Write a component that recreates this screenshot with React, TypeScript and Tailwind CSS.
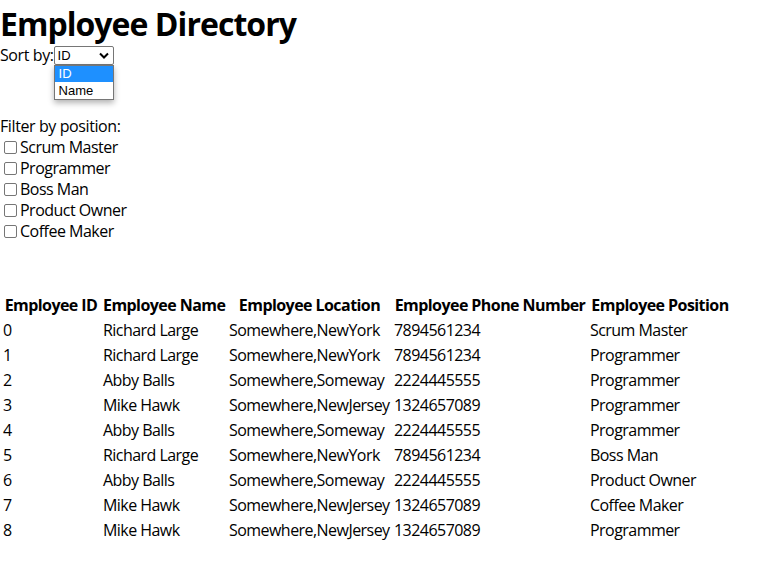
import React from "react";

const rows = [
  ["0", "Richard Large", "Somewhere,NewYork", "7894561234", "Scrum Master"],
  ["1", "Richard Large", "Somewhere,NewYork", "7894561234", "Programmer"],
  ["2", "Abby Balls", "Somewhere,Someway", "2224445555", "Programmer"],
  ["3", "Mike Hawk", "Somewhere,NewJersey", "1324657089", "Programmer"],
  ["4", "Abby Balls", "Somewhere,Someway", "2224445555", "Programmer"],
  ["5", "Richard Large", "Somewhere,NewYork", "7894561234", "Boss Man"],
  ["6", "Abby Balls", "Somewhere,Someway", "2224445555", "Product Owner"],
  ["7", "Mike Hawk", "Somewhere,NewJersey", "1324657089", "Coffee Maker"],
  ["8", "Mike Hawk", "Somewhere,NewJersey", "1324657089", "Programmer"],
];

const positions = ["Scrum Master", "Programmer", "Boss Man", "Product Owner", "Coffee Maker"];

export default function App() {
  return (
    <div
      className="bg-white text-black min-h-[561px] text-[16px] leading-[21px] tracking-[-0.025em]"
      style={{ fontFamily: '"Open Sans", "Noto Sans", sans-serif' }}
    >
      <h1 className="m-0 text-[32px] font-bold leading-[43px] pt-[2px] h-[43px] tracking-[-0.03em]">
        Employee Directory
      </h1>
      <div className="relative flex items-center h-[21px]">
        <span className="pt-[3px]">Sort by:</span>
        <div className="relative mt-[3px] tracking-normal">
          <div
            className="flex items-center justify-between w-[60px] h-[19px] border border-[#767676] rounded-[2px] bg-white pl-[3px] pr-[4px] text-[13px] leading-[17px]"
            style={{ fontFamily: '"Liberation Sans", Arial, sans-serif' }}
          >
            <span>ID</span>
            <svg width="10" height="7" viewBox="0 0 10 7" className="mt-[1px]">
              <path d="M1 1.5 L5 5.5 L9 1.5" fill="none" stroke="#000" strokeWidth="2" />
            </svg>
          </div>
          <div
            className="absolute left-0 top-[19px] w-[60px] border border-[#767676] bg-white shadow-[0_3px_6px_rgba(0,0,0,0.3)] text-[13px] leading-[16px] z-10"
            style={{ fontFamily: '"Liberation Sans", Arial, sans-serif' }}
          >
            <div className="bg-[#1e90ff] text-white pl-[4px] h-[16px]">ID</div>
            <div className="pl-[4px] h-[17px] leading-[17px]">Name</div>
          </div>
        </div>
      </div>
      <div className="mt-[52px]">Filter by position:</div>
      <div className="flex flex-col">
        {positions.map((p) => (
          <label key={p} className="flex items-center h-[21px]">
            <span className="inline-block w-[13px] h-[13px] ml-[4px] mr-[3px] border border-[#767676] rounded-[2px] bg-white" />
            <span className="tracking-[-0.032em]">{p}</span>
          </label>
        ))}
      </div>
      <table className="mt-[50px] table-fixed border-separate border-spacing-[2px] w-[733px]">
        <colgroup>
          <col className="w-[98px]" />
          <col className="w-[124px]" />
          <col className="w-[163px]" />
          <col className="w-[194px]" />
          <col className="w-[142px]" />
        </colgroup>
        <thead>
          <tr>
            {["Employee ID", "Employee Name", "Employee Location", "Employee Phone Number", "Employee Position"].map(
              (h) => (
                <th key={h} className="p-px font-bold text-center whitespace-nowrap tracking-[-0.035em]">
                  {h}
                </th>
              )
            )}
          </tr>
        </thead>
        <tbody>
          {rows.map((r) => (
            <tr key={r[0]}>
              {r.map((c, i) => (
                <td key={i} className="p-px text-left whitespace-nowrap tracking-[-0.034em]">
                  {c}
                </td>
              ))}
            </tr>
          ))}
        </tbody>
      </table>
    </div>
  );
}
